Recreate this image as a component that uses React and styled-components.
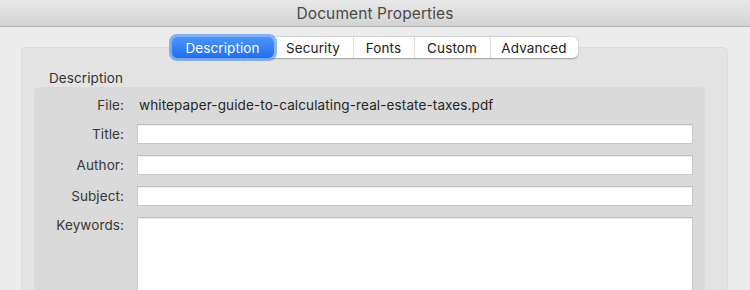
import React from "react";
import styled, { createGlobalStyle } from "styled-components";

const Global = createGlobalStyle`
  html, body { margin: 0; padding: 0; }
  body {
    background: #ececec;
    font-family: Inter, "Noto Sans", "Liberation Sans", sans-serif;
    overflow: hidden;
  }
`;

const Window = styled.div`
  width: 750px;
  height: 290px;
  background: #ececec;
  display: flex;
  flex-direction: column;
  overflow: hidden;
`;

const TitleBar = styled.div`
  height: 26px;
  flex: none;
  display: flex;
  align-items: center;
  justify-content: center;
  background: linear-gradient(#e8e8e8, #d3d3d3);
  border-bottom: 1px solid #b4b4b4;
  color: #4a4a4a;
  font-size: 15.5px;
  letter-spacing: 0.1px;
`;

const Body = styled.div`
  flex: 1;
  padding: 20px 22px 0 21px;
  display: flex;
  flex-direction: column;
`;

const GroupBox = styled.div`
  flex: 1;
  background: #e3e3e3;
  border: 1px solid #dcdcdc;
  border-bottom: none;
  border-radius: 5px 5px 0 0;
  padding: 0 22px 0 12px;
  display: flex;
  flex-direction: column;
`;

const TabRow = styled.div`
  align-self: center;
  margin-top: -11px;
  margin-left: 10px;
  display: flex;
  height: 21px;
  background: #ffffff;
  border-radius: 5px;
  box-shadow: 0 0.5px 1.5px rgba(0, 0, 0, 0.28), 0 0 0 0.5px rgba(0, 0, 0, 0.08);
`;

const Tab = styled.div`
  width: ${(p) => p.$w}px;
  display: flex;
  align-items: center;
  justify-content: center;
  font-size: 13.5px;
  letter-spacing: 0.1px;
  color: ${(p) => (p.$active ? "#ffffff" : "#222222")};
  border-left: ${(p) => (p.$sep ? "1px solid #dedede" : "none")};
  box-sizing: border-box;
  border-radius: ${(p) => (p.$active ? "5px" : "0")};
  background: ${(p) =>
    p.$active ? "linear-gradient(#4b95f8, #1f6ff1)" : "transparent"};
  box-shadow: ${(p) =>
    p.$active ? "0 0 0 3px rgba(98, 157, 245, 0.75)" : "none"};
  position: ${(p) => (p.$active ? "relative" : "static")};
  &:last-child {
    border-radius: 0 5px 5px 0;
  }
`;

const SectionLabel = styled.div`
  margin: 12px 0 0 15px;
  font-size: 13.5px;
  letter-spacing: 0.1px;
  color: #333333;
  height: 17px;
  line-height: 17px;
`;

const Panel = styled.div`
  flex: 1;
  margin-top: 0;
  background: #dadada;
  border-radius: 5px 5px 0 0;
  padding: 10px 12px 0 0;
  display: grid;
  grid-template-columns: 90px 1fr;
  column-gap: 13px;
  row-gap: 11px;
  align-content: start;
`;

const Label = styled.div`
  text-align: right;
  font-size: 13.5px;
  letter-spacing: 0.1px;
  color: #383838;
  align-self: ${(p) => (p.$top ? "start" : "center")};
  line-height: ${(p) => (p.$top ? "16px" : "normal")};
`;

const FileName = styled.div`
  font-size: 13.5px;
  letter-spacing: 0.12px;
  color: #262626;
  height: 16px;
  line-height: 16px;
  padding-left: 2px;
`;

const Field = styled.div`
  height: ${(p) => p.$h || 20}px;
  box-sizing: border-box;
  background: #ffffff;
  border: 1px solid #c8c8c8;
  border-top-color: #bdbdbd;
  box-shadow: inset 0 1px 0 #f0f0f0;
`;

const tabs = [
  { label: "Description", w: 102, active: true },
  { label: "Security", w: 79 },
  { label: "Fonts", w: 61 },
  { label: "Custom", w: 76 },
  { label: "Advanced", w: 88 },
];

export default function App() {
  return (
    <>
      <Global />
      <Window>
        <TitleBar>Document Properties</TitleBar>
        <Body>
          <GroupBox>
            <TabRow>
              {tabs.map((t, i) => (
                <Tab
                  key={t.label}
                  $w={t.w}
                  $active={t.active}
                  $sep={i > 1}
                >
                  {t.label}
                </Tab>
              ))}
            </TabRow>
            <SectionLabel>Description</SectionLabel>
            <Panel>
              <Label>File:</Label>
              <FileName>whitepaper-guide-to-calculating-real-estate-taxes.pdf</FileName>
              <Label>Title:</Label>
              <Field />
              <Label>Author:</Label>
              <Field />
              <Label>Subject:</Label>
              <Field />
              <Label $top>Keywords:</Label>
              <Field $h={80} />
            </Panel>
          </GroupBox>
        </Body>
      </Window>
    </>
  );
}
